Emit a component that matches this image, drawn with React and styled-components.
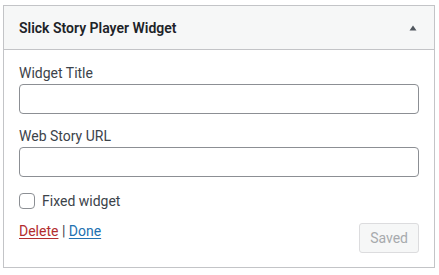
import React from "react";
import styled, { createGlobalStyle } from "styled-components";

const Global = createGlobalStyle`
  html, body { margin: 0; padding: 0; background: #fff; }
  body { font-family: Roboto, "Noto Sans", sans-serif; font-size: 14px; color: #3c434a; }
  * { box-sizing: border-box; }
`;

const Widget = styled.div`
  margin: 5px 0 0 3px;
  width: 432px;
  border: 1px solid #c3c4c7;
  background: #fff;
`;

const Header = styled.div`
  display: flex;
  align-items: center;
  justify-content: space-between;
  height: 44px;
  padding: 0 17px 0 15px;
  background: #f6f7f7;
  border-bottom: 1px solid #c3c4c7;
`;

const Title = styled.h3`
  margin: 0;
  font-size: 14px;
  font-weight: 600;
  color: #1d2327;
  line-height: 20px;
`;

const Arrow = styled.svg`
  display: block;
  width: 8px;
  height: 6px;
`;

const Body = styled.div`
  padding: 13px 15px 14px;
`;

const Field = styled.div`
  display: flex;
  flex-direction: column;
  gap: 1px;
  margin-bottom: ${(p) => p.$mb || 12}px;
`;

const Label = styled.label`
  display: block;
  line-height: 20px;
  font-size: 14px;
  color: #3c434a;
`;

const TextInput = styled.input`
  display: block;
  width: 100%;
  height: 30px;
  margin: 0;
  padding: 0 8px;
  border: 1px solid #8c8f94;
  border-radius: 4px;
  background: #fff;
  font: inherit;
  outline: none;
`;

const CheckRow = styled.label`
  display: flex;
  align-items: center;
  gap: 7px;
  height: 16px;
  margin-bottom: 14px;
  line-height: 20px;
`;

const Box = styled.span`
  width: 16px;
  height: 16px;
  border: 1px solid #8c8f94;
  border-radius: 4px;
  background: #fff;
  flex: none;
`;

const Actions = styled.div`
  display: flex;
  justify-content: space-between;
  align-items: flex-start;
`;

const Links = styled.div`
  margin-top: -2px;
  line-height: 20px;
  color: #3c434a;
`;

const Link = styled.a`
  color: ${(p) => p.$color};
  text-decoration: underline;
  text-underline-offset: 2px;
  cursor: pointer;
`;

const SaveButton = styled.button`
  height: 30px;
  padding: 0 10px;
  margin-top: 0;
  border: 1px solid #dcdcde;
  border-radius: 3px;
  background: #f6f7f7;
  color: #a7aaad;
  font: inherit;
  font-size: 14px;
  line-height: 28px;
`;

export default function App() {
  return (
    <>
      <Global />
      <Widget>
        <Header>
          <Title>Slick Story Player Widget</Title>
          <Arrow viewBox="0 0 8 6">
            <path d="M4 0.5 L7.5 5.5 L0.5 5.5 Z" fill="#50575e" />
          </Arrow>
        </Header>
        <Body>
          <Field>
            <Label>Widget Title</Label>
            <TextInput type="text" />
          </Field>
          <Field $mb={16}>
            <Label>Web Story URL</Label>
            <TextInput type="text" />
          </Field>
          <CheckRow>
            <Box />
            <span>Fixed widget</span>
          </CheckRow>
          <Actions>
            <Links>
              <Link $color="#b32d2e">Delete</Link> | <Link $color="#2271b1">Done</Link>
            </Links>
            <SaveButton disabled>Saved</SaveButton>
          </Actions>
        </Body>
      </Widget>
    </>
  );
}
